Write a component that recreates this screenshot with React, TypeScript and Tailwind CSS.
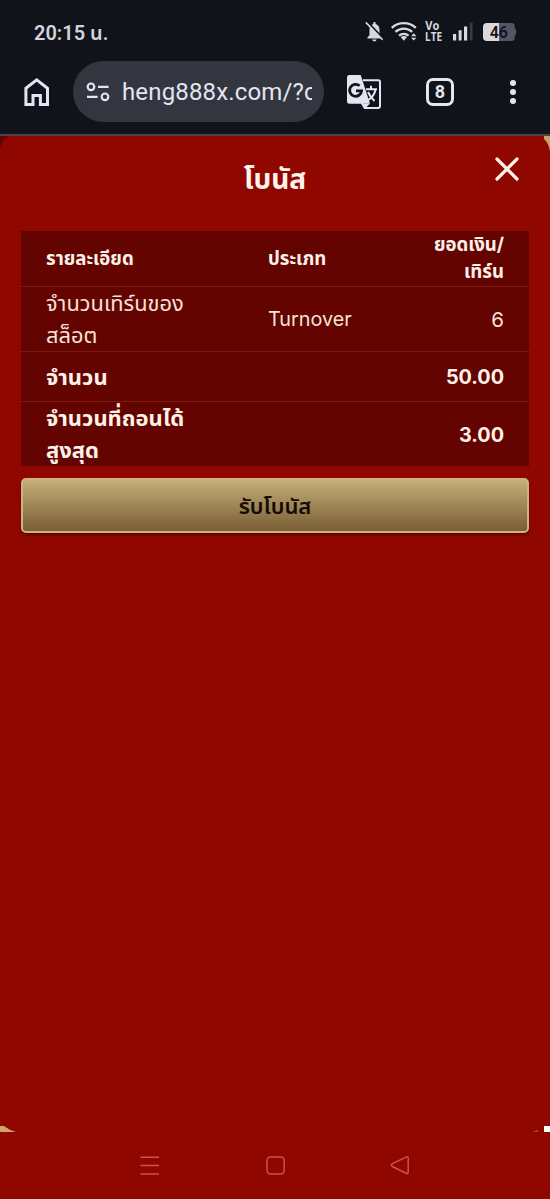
import { ReactNode } from "react";

type RowProps = {
  label: ReactNode;
  type?: string;
  amount: ReactNode;
  className: string;
};

const fontClass = {
  page: "font-['Inter','Noto_Sans_Thai','Noto_Sans',sans-serif]",
  system: "font-['Roboto','Noto_Sans_Thai','Noto_Sans',sans-serif]",
};

const StatusBar = () => {
  return (
    <div className="flex h-[61px] items-start justify-between pl-[34px] pr-[33px] pt-[18px]">
      <span className="mt-px h-7 whitespace-nowrap text-[20px] font-semibold leading-7 text-[#d3d4db]">20:15 น.</span>
      <svg width="152" height="28" viewBox="365 18 152 28" fill="none">
        {/* muted bell */}
        <path d="M367.5 38.5v-1.3l2-2v-5.4c0-2.8 1.4-5 3.8-5.7v-1c0-1.6 2.3-1.6 2.3 0v1c2.4.7 3.9 2.9 3.9 5.7v5.4l2 2v1.3zM372.3 39.4h4.2c0 2.6-4.2 2.6-4.2 0z" fill="#d8d9df" />
        <path d="M367 21.5l17 18" stroke="#11131b" strokeWidth="2" />
        <path d="M365.8 22.4l16.8 17.4" stroke="#d8d9df" strokeWidth="1.6" />
        {/* wifi */}
        <path d="M391.8 27.8c6.8-6.3 17.2-6.3 24 0M395.4 31.8c4.9-4.3 11.9-4.3 16.8 0M399 35.6c2.8-2.2 6.8-2.2 9.6 0" stroke="#d8d9df" strokeWidth="2.4" />
        <path d="M400.6 37.1c1.8-1.4 4.6-1.4 6.4 0l-3.2 3.6z" fill="#d8d9df" />
        <path d="M411 36.3l2.7-3 2.7 3zM411 37.8h5.4l-2.7 2.8z" fill="#d8d9df" />
        <text x="425.3" y="30.4" fontSize="11.5" fontWeight="700" textLength="14" lengthAdjust="spacingAndGlyphs" fill="#d8d9df" className="font-['Open_Sans',sans-serif]">
          Vo
        </text>
        <text x="425" y="40.6" fontSize="12" fontWeight="700" textLength="17" lengthAdjust="spacingAndGlyphs" fill="#d8d9df" className="font-['Open_Sans',sans-serif]">
          LTE
        </text>
        {/* signal */}
        <path d="M453 34h3.2v6.5H453zM458.6 30.3h3v10.2h-3zM464 26.5h3.2v14H464z" fill="#d8d9df" />
        <path d="M469.8 22.5h2.8v18h-2.8z" fill="#3a3b41" />
        {/* battery */}
        <path d="M487 23h12.500v18H487a4 4 0 0 1-4-4V27a4 4 0 0 1 4-4z" fill="#d8d9df" />
        <path d="M499 23h12.500q3.200 0 3.200 3.200v2q1.600.8 1.600 3.800t-1.600 3.800v2q0 3.200-3.200 3.200H499z" fill="#54565f" />
        <text x="498.8" y="37.7" textAnchor="middle" fontSize="16" fontWeight="600" fill="#11131b" className="font-['Roboto',sans-serif]">
          46
        </text>
      </svg>
    </div>
  );
};

const BrowserBar = () => {
  return (
    <div className="flex h-[61px] items-center">
      <svg className="ml-6 shrink-0" width="26" height="30" viewBox="24 77 26 30" fill="none">
        <path d="M25.9 104.4V88.2l10.8-8.3 10.8 8.3v16.2h-7.1v-9h-7.4v9z" stroke="#e3e5f2" strokeWidth="3" />
      </svg>
      <div className="ml-[23px] flex h-[61px] w-[251px] shrink-0 items-center rounded-full bg-[#33353f]">
        <svg className="ml-3 shrink-0" width="26" height="22" viewBox="85 81 26 22" fill="none" stroke="#e3e5f2" strokeWidth="2.2">
          <circle cx="91" cy="86.8" r="3.3" />
          <path d="M98 86.8h10.6M87 96.8h10.6" />
          <circle cx="105" cy="96.8" r="3.3" />
        </svg>
        <div className="ml-[11px] w-[190px] overflow-hidden whitespace-nowrap text-[24px] leading-8 tracking-[0.15px] text-[#e3e5f2]">
          heng888x.com/?c
        </div>
      </div>
      <svg className="ml-[22px] shrink-0" width="36" height="36" viewBox="346 74 36 36" fill="none">
        <path d="M363 80.3h15.2a1.8 1.8 0 0 1 1.8 1.8v24a1.8 1.8 0 0 1-1.8 1.8h-13.5l-3-5" stroke="#e3e5f2" strokeWidth="2" />
        <path d="M349.5 75h11.2l9.3 28.8h-20.5a2.5 2.5 0 0 1-2.5-2.5V77.5a2.5 2.5 0 0 1 2.5-2.5z" fill="#e3e5f2" />
        <path d="M363 103.8h6.8l-4.7 4.7z" fill="#e3e5f2" />
        <path d="M359.6 85.8a6 6 0 1 0 2 5h-5.6" stroke="#11131b" strokeWidth="2.800" />
        <path d="M366 89.200h11M371 85.800v3.400M375.500 89.500c-.8 4.500-3.500 8-7 10.300M368 92c1.500 3.500 3.800 6.500 6.500 9" stroke="#e3e5f2" strokeWidth="2" />
      </svg>
      <div className="ml-11 flex h-7 w-7 shrink-0 items-center justify-center rounded-[7px] border-[3px] border-[#e3e5f2] text-[18px] font-bold leading-none text-[#e3e5f2]">
        8
      </div>
      <div className="ml-[56px] flex flex-col gap-[3px]">
        <span className="h-1.5 w-1.5 rounded-full bg-[#e3e5f2]" />
        <span className="h-1.5 w-1.5 rounded-full bg-[#e3e5f2]" />
        <span className="h-1.5 w-1.5 rounded-full bg-[#e3e5f2]" />
      </div>
    </div>
  );
};

const Row = ({ label, type, amount, className }: RowProps) => {
  return (
    <div className={`grid grid-cols-[222px_1fr_auto] items-center whitespace-nowrap px-[25px] ${className}`}>
      <div>{label}</div>
      <div className="text-[19.8px]">{type}</div>
      <div className="text-right">{amount}</div>
    </div>
  );
};

const BonusModal = () => {
  return (
    <div className="relative h-[996px] bg-[#900700] px-[21px]">
      {/* page behind the rounded corners */}
      <svg className="absolute left-0 top-0" width="10" height="12" viewBox="0 0 10 12">
        <path d="M0 0h10Q2 2 0 12z" fill="#5d0300" />
      </svg>
      <svg className="absolute right-0 top-0" width="7" height="16" viewBox="0 0 7 16">
        <path d="M1 0h6v15Q5 6 1 3z" fill="#c9a063" />
      </svg>
      <svg className="absolute bottom-0 left-0" width="16" height="7" viewBox="0 0 16 7">
        <path d="M0 1h4Q9 5 16 7H0z" fill="#cda66c" />
      </svg>
      <svg className="absolute bottom-0 right-0" width="18" height="7" viewBox="0 0 18 7">
        <path d="M1 6.7l5-2v2z" fill="#c4483b" />
        <path d="M12 1h6v6h-6z" fill="#fff" />
      </svg>
      <div className="flex h-[95px] items-start justify-center pt-[23px]">
        <h1 className="whitespace-nowrap text-[28px] font-bold leading-10 text-[#fff3ec]">โบนัส</h1>
      </div>
      <button className="absolute right-[31px] top-[21px]" aria-label="close">
        <svg width="24" height="24" viewBox="0 0 24 24" stroke="#fff3ec" strokeWidth="3.2" strokeLinecap="round">
          <path d="M2 2l20 20M22 2L2 22" />
        </svg>
      </button>
      <div className="divide-y divide-[#7d1c17] bg-[#630400] text-[22px] leading-8 text-[#fff0e8]">
        <Row
          className="h-[56px] pb-px text-[18.6px] font-bold leading-[27px] [&>div]:text-[18.6px]"
          label="รายละเอียด"
          type="ประเภท"
          amount={
            <>
              ยอดเงิน/
              <br />
              เทิร์น
            </>
          }
        />
        <Row
          className="h-[65px] text-[21.8px] text-[#f8e2d9]"
          label={
            <>
              จำนวนเทิร์นของ
              <br />
              สล็อต
            </>
          }
          type="Turnover"
          amount={<span className="text-[20.5px]">6</span>}
        />
        <Row className="h-[50px] font-bold" label="จำนวน" amount={<span className="text-[19.8px]">50.00</span>} />
        <Row
          className="h-[64px] font-bold"
          label={
            <>
              จำนวนที่ถอนได้
              <br />
              สูงสุด
            </>
          }
          amount={<span className="text-[19.8px]">3.00</span>}
        />
      </div>
      <button className="mt-3 flex h-[55px] w-full items-center justify-center whitespace-nowrap rounded-[5px] border-2 border-[#cfb27d] bg-linear-to-b from-[#c5af7b] to-[#7a5e35] pt-px text-[22px] font-semibold text-[#160c04] shadow-[0_2px_3px_rgba(40,0,0,0.5)]">
        รับโบนัส
      </button>
    </div>
  );
};

const NavBar = () => {
  return (
    <div className="flex h-[67px] justify-center bg-[#900700] pt-6">
      <svg width="270" height="20" viewBox="140 1156 270 20" fill="none" stroke="#cc5448" strokeWidth="1.5">
        <path d="M140.5 1157.2h18.5M140.5 1165.5h18.5M140.5 1174h18.5" />
        <rect x="267" y="1157" width="17.2" height="17" rx="3.5" />
        <path d="M392.5 1163.7l13.5-6.6q2.2-.9 2.2 1.3v13.5q0 2.2-2.2 1.3l-13.5-6.7q-2.4-1.4 0-2.8z" />
      </svg>
    </div>
  );
};

export default function App() {
  return (
    <div className={`h-[1199px] w-[550px] overflow-hidden bg-[#900700] ${fontClass.page}`}>
      <div className={`h-[136px] border-b-2 border-[#4a4245] bg-[#11131b] ${fontClass.system}`}>
        <StatusBar />
        <BrowserBar />
      </div>
      <BonusModal />
      <NavBar />
    </div>
  );
}
